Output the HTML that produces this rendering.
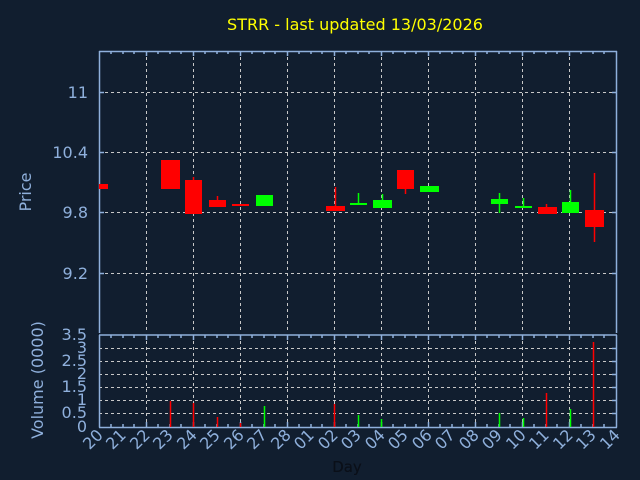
<!DOCTYPE html>
<html><head><meta charset="utf-8"><style>
html,body{margin:0;padding:0;background:#111e2f;width:640px;height:480px;overflow:hidden}
svg{display:block}
text{font-family:"DejaVu Sans","Liberation Sans",sans-serif}
</style></head><body>
<svg width="640" height="480" viewBox="0 0 640 480" xmlns="http://www.w3.org/2000/svg">
<rect width="640" height="480" fill="#111e2f"/>
<text x="355" y="30" fill="#ffff00" font-size="16" text-anchor="middle">STRR - last updated 13/03/2026</text>
<g stroke="#c8c8c8" stroke-width="1" stroke-dasharray="3,3" fill="none">
<path d="M146.5 51V333M193.5 51V333M240.5 51V333M287.5 51V333M334.5 51V333M381.5 51V333M428.5 51V333M475.5 51V333M522.5 51V333M569.5 51V333"/>
<path d="M99 92.5H617M99 152.5H617M99 212.5H617M99 273.5H617"/>
<path d="M146.5 335V427M193.5 335V427M240.5 335V427M287.5 335V427M334.5 335V427M381.5 335V427M428.5 335V427M475.5 335V427M522.5 335V427M569.5 335V427"/>
<path d="M99 348.5H617M99 361.5H617M99 374.5H617M99 387.5H617M99 400.5H617M99 413.5H617"/>
</g>
<g stroke="#8fb0dc" stroke-width="1.5" fill="none">
<path d="M99.5 51V333M99 51.5H617M616.5 51V333"/>
<path d="M99.5 335V427.5M99 427.5H617M616.5 335V427.5M99 335H617"/>
<path d="M99 92.5h5M99 152.5h5M99 212.5h5M99 273.5h5M612 92.5h5M612 152.5h5M612 212.5h5M612 273.5h5"/>
<path d="M612 348.5h5M612 361.5h5M612 374.5h5M612 387.5h5M612 400.5h5M612 413.5h5"/>
<path d="M111 51v3M123 51v3M134 51v3M146.5 51v5M158 51v3M170 51v3M181 51v3M193.5 51v5M205 51v3M217 51v3M228 51v3M240.5 51v5M252 51v3M264 51v3M275 51v3M287.5 51v5M299 51v3M311 51v3M322 51v3M334.5 51v5M346 51v3M358 51v3M369 51v3M381.5 51v5M393 51v3M405 51v3M416 51v3M428.5 51v5M440 51v3M452 51v3M463 51v3M475.5 51v5M487 51v3M499 51v3M510 51v3M522.5 51v5M534 51v3M546 51v3M557 51v3M569.5 51v5M581 51v3M593 51v3M604 51v3"/>
<path d="M111 335v3M123 335v3M134 335v3M146.5 335v5M158 335v3M170 335v3M181 335v3M193.5 335v5M205 335v3M217 335v3M228 335v3M240.5 335v5M252 335v3M264 335v3M275 335v3M287.5 335v5M299 335v3M311 335v3M322 335v3M334.5 335v5M346 335v3M358 335v3M369 335v3M381.5 335v5M393 335v3M405 335v3M416 335v3M428.5 335v5M440 335v3M452 335v3M463 335v3M475.5 335v5M487 335v3M499 335v3M510 335v3M522.5 335v5M534 335v3M546 335v3M557 335v3M569.5 335v5M581 335v3M593 335v3M604 335v3"/>
<path d="M111 427v-3M123 427v-3M134 427v-3M146.5 427v-5M158 427v-3M170 427v-3M181 427v-3M193.5 427v-5M205 427v-3M217 427v-3M228 427v-3M240.5 427v-5M252 427v-3M264 427v-3M275 427v-3M287.5 427v-5M299 427v-3M311 427v-3M322 427v-3M334.5 427v-5M346 427v-3M358 427v-3M369 427v-3M381.5 427v-5M393 427v-3M405 427v-3M416 427v-3M428.5 427v-5M440 427v-3M452 427v-3M463 427v-3M475.5 427v-5M487 427v-3M499 427v-3M510 427v-3M522.5 427v-5M534 427v-3M546 427v-3M557 427v-3M569.5 427v-5M581 427v-3M593 427v-3M604 427v-3"/>
</g>
<g fill="#8fb0dc" font-size="16" text-anchor="end">
<text x="88" y="98">11</text>
<text x="88" y="158">10.4</text>
<text x="88" y="218">9.8</text>
<text x="88" y="279">9.2</text>
<text x="87" y="340">3.5</text>
<text x="87" y="353">3</text>
<text x="87" y="366">2.5</text>
<text x="87" y="379">2</text>
<text x="87" y="392">1.5</text>
<text x="87" y="405">1</text>
<text x="87" y="418">0.5</text>
<text x="87" y="432">0</text>
</g>
<text transform="translate(31 192) rotate(-90)" fill="#8fb0dc" font-size="16" text-anchor="middle">Price</text>
<text transform="translate(43 380) rotate(-90)" fill="#8fb0dc" font-size="16" text-anchor="middle">Volume (0000)</text>
<text x="347" y="472" fill="#111e2f" font-size="15" text-anchor="middle" style="fill:#0a0f18">Day</text>
<g fill="#8fb0dc" font-size="16" text-anchor="end">
<text transform="translate(104 436) rotate(-45)">20</text>
<text transform="translate(127 436) rotate(-45)">21</text>
<text transform="translate(151 436) rotate(-45)">22</text>
<text transform="translate(174 436) rotate(-45)">23</text>
<text transform="translate(198 436) rotate(-45)">24</text>
<text transform="translate(221 436) rotate(-45)">25</text>
<text transform="translate(245 436) rotate(-45)">26</text>
<text transform="translate(268 436) rotate(-45)">27</text>
<text transform="translate(292 436) rotate(-45)">28</text>
<text transform="translate(315 436) rotate(-45)">01</text>
<text transform="translate(339 436) rotate(-45)">02</text>
<text transform="translate(362 436) rotate(-45)">03</text>
<text transform="translate(386 436) rotate(-45)">04</text>
<text transform="translate(409 436) rotate(-45)">05</text>
<text transform="translate(433 436) rotate(-45)">06</text>
<text transform="translate(456 436) rotate(-45)">07</text>
<text transform="translate(480 436) rotate(-45)">08</text>
<text transform="translate(503 436) rotate(-45)">09</text>
<text transform="translate(527 436) rotate(-45)">10</text>
<text transform="translate(550 436) rotate(-45)">11</text>
<text transform="translate(574 436) rotate(-45)">12</text>
<text transform="translate(597 436) rotate(-45)">13</text>
<text transform="translate(621 436) rotate(-45)">14</text>
</g>
<g stroke-width="1.5">
<path stroke="#ff0000" d="M193.5 177V180M217.5 196V200M335.5 187V206M405.5 189V194M546.5 204V207M594.5 173V242"/>
<path stroke="#00ff00" d="M358.5 193V203M382.5 194V200M499.5 193V213M523.5 198V206M570.5 190V202"/>
</g>
<g fill="#ff0000">
<rect x="99" y="184" width="9" height="5"/>
<rect x="161" y="160" width="19" height="29"/>
<rect x="185" y="180" width="17" height="34"/>
<rect x="209" y="200" width="17" height="7"/>
<rect x="232" y="204" width="17" height="2"/>
<rect x="326" y="206" width="19" height="5"/>
<rect x="397" y="170" width="17" height="19"/>
<rect x="538" y="207" width="19" height="7"/>
<rect x="585" y="210" width="19" height="17"/>
</g>
<g fill="#00ff00">
<rect x="256" y="195" width="17" height="11"/>
<rect x="350" y="203" width="17" height="2"/>
<rect x="373" y="200" width="19" height="8"/>
<rect x="420" y="186" width="19" height="6"/>
<rect x="491" y="199" width="17" height="5"/>
<rect x="515" y="206" width="17" height="2"/>
<rect x="562" y="202" width="17" height="11"/>
</g>
<g stroke-width="1.5">
<path stroke="#ff0000" d="M170.5 401V427M193.5 403V427M217.5 417V427M240.5 423V427M334.5 404V427M546.5 393V427M593.5 342V427"/>
<path stroke="#00ff00" d="M264.5 406V427M358.5 415V427M381.5 419V427M499.5 413V427M523.5 418V427M570.5 409V427"/>
</g>
<text x="347" y="472" fill="#0a0f18" font-size="15" text-anchor="middle">Day</text>
</svg>
</body></html>
